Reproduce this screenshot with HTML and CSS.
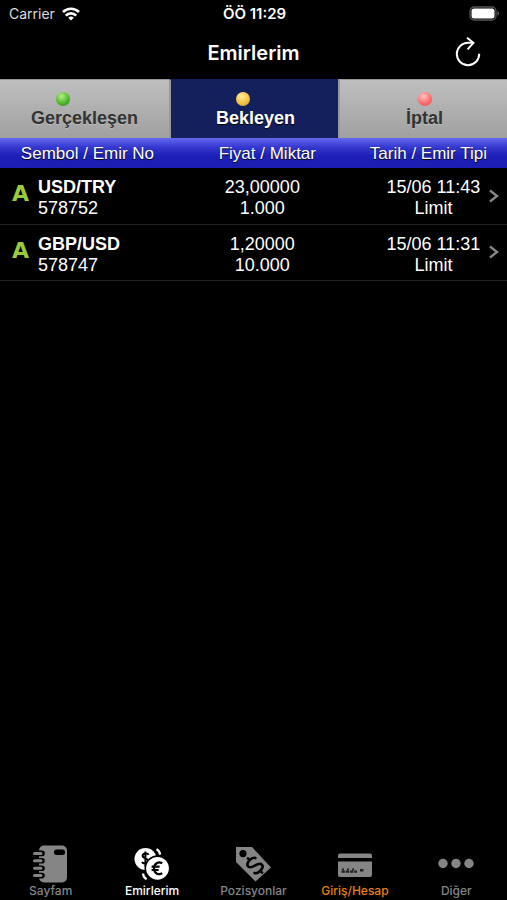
FILE: index.html
```html
<!DOCTYPE html>
<html lang="tr">
<head>
    <meta charset="utf-8">
    <meta name="viewport" content="width=device-width, initial-scale=1">
    <title>Emirlerim</title>
    <link rel="stylesheet" href="styles.css">
</head>
<body>
    <div class="app">
        <div class="status-bar">
            <div class="carrier">
                <span>Carrier</span>
                <svg width="18" height="14" viewBox="0 0 18 14" fill="none" stroke="#fff" stroke-width="2.6">
                    <path d="M1 5a11.5 11.5 0 0 1 16 0" />
                    <path d="M3.8 8.6a7.2 7.2 0 0 1 10.4 0" />
                    <path d="M9 13.6 6.2 10.8a4 4 0 0 1 5.6 0z" fill="#fff" stroke="none" />
                </svg>
            </div>
            <div class="clock">ÖÖ 11:29</div>
            <div class="battery">
                <svg width="31" height="15" viewBox="0 0 31 15">
                    <rect x="1" y="1" width="26" height="13" rx="4" fill="none" stroke="#555" stroke-width="1.3" />
                    <rect x="2.5" y="2.5" width="23" height="10" rx="2.5" fill="#fff" />
                    <path d="M28.5 5.3c2 .6 2 3.8 0 4.4z" fill="#666" />
                </svg>
            </div>
        </div>

        <header class="nav-bar">
            <h1>Emirlerim</h1>
            <button class="refresh" type="button" aria-label="Yenile">
                <svg width="26" height="32" viewBox="0 0 26 32" fill="none" stroke="#fff" stroke-width="2">
                    <path d="M24.2 16.8A11.2 11.2 0 1 1 13 5.8h5.5" />
                    <path d="M12 .8l6.4 5-5.8 6.6" />
                </svg>
            </button>
        </header>

        <div class="tabs">
            <button class="tab" type="button">
                <span class="dot dot-green"></span>
                <span>Gerçekleşen</span>
            </button>
            <button class="tab active" type="button">
                <span class="dot dot-yellow"></span>
                <span>Bekleyen</span>
            </button>
            <button class="tab" type="button">
                <span class="dot dot-red"></span>
                <span>İptal</span>
            </button>
        </div>

        <table class="orders">
            <colgroup>
                <col class="col-symbol">
                <col class="col-price">
                <col class="col-date">
                <col class="col-more">
            </colgroup>
            <thead>
                <tr>
                    <th>Sembol / Emir No</th>
                    <th class="head-price">Fiyat / Miktar</th>
                    <th colspan="2">Tarih / Emir Tipi</th>
                </tr>
            </thead>
            <tbody>
                <tr>
                    <td>
                        <div class="symbol">
                            <span class="side">A</span>
                            <div><strong>USD/TRY</strong><br>578752</div>
                        </div>
                    </td>
                    <td>23,00000<br>1.000</td>
                    <td class="date">15/06 11:43<br>Limit</td>
                    <td class="more">
                        <svg width="10" height="14" viewBox="0 0 10 14" fill="none" stroke="#8a8a8a" stroke-width="2.3"><path d="M1 1.5 8 7l-7 5.5" /></svg>
                    </td>
                </tr>
                <tr>
                    <td>
                        <div class="symbol">
                            <span class="side">A</span>
                            <div><strong>GBP/USD</strong><br>578747</div>
                        </div>
                    </td>
                    <td>1,20000<br>10.000</td>
                    <td class="date">15/06 11:31<br>Limit</td>
                    <td class="more">
                        <svg width="10" height="14" viewBox="0 0 10 14" fill="none" stroke="#8a8a8a" stroke-width="2.3"><path d="M1 1.5 8 7l-7 5.5" /></svg>
                    </td>
                </tr>
            </tbody>
        </table>

        <nav class="tab-bar">
            <a href="#" class="item">
                <svg width="38" height="38" viewBox="0 0 38 38">
                    <rect x="7" y="0.5" width="28" height="37" rx="5" fill="#858585" />
                    <rect x="22" y="4.5" width="11" height="5.5" rx="2.5" fill="#000" />
                    <path d="M6 8.4h4M6 15.8h4M6 23.2h4M6 30.6h4" fill="none" stroke="#000" stroke-width="5.6" stroke-linecap="round" />
                    <path d="M2.5 8.4H9M2.5 15.8H9M2.5 23.2H9M2.5 30.6H9" fill="none" stroke="#858585" stroke-width="3" stroke-linecap="round" />
                </svg>
                <span>Sayfam</span>
            </a>
            <a href="#" class="item selected">
                <svg width="38" height="38" viewBox="0 0 38 38" fill="none">
                    <circle cx="12.5" cy="14" r="11" fill="#fff" />
                    <path d="M15.6 9.8c-1-1.8-5.8-1.8-6 1-.2 3 6 2.2 5.8 5.4-.2 2.8-5.4 2.8-6.4.6M12.4 6.5v15" stroke="#000" stroke-width="2" />
                    <circle cx="24.5" cy="23.3" r="13" fill="#000" />
                    <circle cx="24.5" cy="23.3" r="11.4" fill="#fff" />
                    <path d="M29.2 18.4c-3-2.2-8.2-.6-8.2 4.9s5.2 7.1 8.2 4.9M18.6 21.7h8M18.6 25h7" stroke="#000" stroke-width="2.2" />
                    <path d="M23.5 4.2c2.2 1 3.4 3 3.6 5.4M10 28.5c.2 2.6 1.4 4.6 3.6 5.8" stroke="#fff" stroke-width="2.2" />
                </svg>
                <span>Emirlerim</span>
            </a>
            <a href="#" class="item">
                <svg width="38" height="38" viewBox="0 0 38 38" fill="none">
                    <path d="M2 2h16l19 20.5L21.5 36.5 2 17z" fill="#858585" />
                    <circle cx="9" cy="8.6" r="3.6" fill="#000" />
                    <g transform="translate(21 20.500) rotate(-45)" stroke="#000" stroke-width="2.6" stroke-linecap="round">
                        <path d="M5.5-5C4-8.500-5-8.500-5.500-4.200-5.800.6 5.600-.8 5.500 4.200 5.300 8.500-4 8.500-5.600 5" />
                        <path d="M0-10v2.500M0 7.500V10" />
                    </g>
                </svg>
                <span>Pozisyonlar</span>
            </a>
            <a href="#" class="item account">
                <svg width="38" height="38" viewBox="0 0 38 38">
                    <path d="M2 13v-2.500q0-2 2-2h30q2 0 2 2V13z" fill="#858585" />
                    <path d="M2 16.5h34V30q0 2-2 2H4q-2 0-2-2z" fill="#858585" />
                    <path d="M5.5 26.600H21M24 25.200h4" stroke="#222" stroke-width="2.4" stroke-dasharray="3.4 .8" />
                    <path d="M6 24.400h2M11 24.400h2M16 24.400h2" stroke="#222" stroke-width="2" />
                </svg>
                <span>Giriş/Hesap</span>
            </a>
            <a href="#" class="item">
                <svg width="38" height="38" viewBox="0 0 38 38" fill="#858585">
                    <circle cx="6" cy="18.5" r="4.7" />
                    <circle cx="19" cy="18.5" r="4.7" />
                    <circle cx="32" cy="18.5" r="4.7" />
                </svg>
                <span>Diğer</span>
            </a>
        </nav>
    </div>
</body>
</html>
```

FILE: styles.css
```css
* {
    margin: 0;
    padding: 0;
    box-sizing: border-box;
}

body {
    background: #000;
    color: #fff;
    font-family: 'Liberation Sans', Arial, sans-serif;
}

svg {
    display: block;
    flex-shrink: 0;
}

button {
    border: none;
    background: none;
    font-family: inherit;
    cursor: pointer;
}

.app {
    display: flex;
    flex-direction: column;
    min-height: 100vh;
}

/* status bar */
.status-bar {
    display: grid;
    grid-template-columns: 1fr auto 1fr;
    align-items: center;
    height: 27px;
    padding: 0 7px 0 9px;
    font-family: Inter, sans-serif;
    font-size: 14px;
}

.carrier {
    display: flex;
    align-items: center;
    gap: 7px;
    color: #ddd;
}

.clock {
    font-size: 15px;
    font-weight: 600;
}

.battery {
    justify-self: end;
}

/* title */
.nav-bar {
    display: grid;
    grid-template-columns: 1fr auto 1fr;
    align-items: center;
    height: 52px;
    padding: 0 26px;
}

.nav-bar h1 {
    grid-column: 2;
    font-family: Inter, sans-serif;
    font-size: 20px;
    font-weight: 600;
}

.refresh {
    justify-self: end;
}

/* order status tabs */
.tabs {
    display: grid;
    grid-template-columns: repeat(3, 1fr);
    height: 59px;
}

.tab {
    display: flex;
    flex-direction: column;
    align-items: center;
    padding-top: 12px;
    border-top: 1px solid #999;
    background: linear-gradient(#bfbfbf, #a0a0a0);
    color: #333;
    font-size: 18px;
    font-weight: bold;
    line-height: 24px;
    text-shadow: 0 1px 0 #bbb;
}

.tab + .tab {
    padding-left: 2px;
    border-left: 2px solid #999;
}

.tab.active {
    border-top-color: #14205c;
    background: #14205c;
    color: #fff;
    text-shadow: 0 1px 1px #000;
}

.dot {
    width: 14px;
    height: 14px;
    border-radius: 50%;
}

.dot-green {
    margin-right: 44px;
    background: radial-gradient(circle at 40% 30%, #b6f08a, #4fb82c 55%, #2b8014);
}

.dot-yellow {
    margin-right: 26px;
    background: radial-gradient(circle at 40% 30%, #ffeb9a, #f2c243 55%, #c99520);
}

.dot-red {
    background: radial-gradient(circle at 40% 30%, #ffc4c4, #ff6e6e 55%, #d94444);
}

/* order list */
.orders {
    width: 100%;
    table-layout: fixed;
    border-collapse: collapse;
    font-size: 18px;
    line-height: 21px;
    text-align: center;
    white-space: nowrap;
}

.col-symbol,
.col-price {
    width: 34.5%;
}

.col-more {
    width: 26px;
}

.orders thead tr {
    height: 30px;
    background: linear-gradient(#6468ef, #3539d0 30%, #1c20b8 60%, #1a1eb2);
}

.orders th {
    font-size: 17px;
    font-weight: normal;
    text-shadow: 0 1px 1px #000;
}

.orders .head-price {
    padding-left: 10px;
}

.orders tbody tr {
    height: 56px;
    border-bottom: 1px solid #222;
}

.orders tbody td {
    padding-top: 5px;
}

.symbol {
    display: flex;
    gap: 7px;
    padding-left: 12px;
    text-align: left;
}

.side {
    width: 19px;
    color: #9acb3c;
    font-family: 'DejaVu Sans', Verdana, sans-serif;
    font-size: 22px;
    font-weight: bold;
    line-height: 34px;
}

.orders tbody .date {
    padding-left: 36px;
}

.orders tbody .more {
    padding-top: 0;
}

.more svg {
    margin: 0 auto;
}

/* bottom navigation */
.tab-bar {
    display: grid;
    grid-template-columns: repeat(5, 1fr);
    margin-top: auto;
    padding-bottom: 1px;
}

.item {
    display: flex;
    flex-direction: column;
    align-items: center;
    color: #858585;
    font-family: Inter, sans-serif;
    font-size: 12px;
    font-weight: 500;
    line-height: 16px;
    text-decoration: none;
}

.item.selected {
    color: #fff;
}

.item.account {
    color: #e8820c;
}
```
